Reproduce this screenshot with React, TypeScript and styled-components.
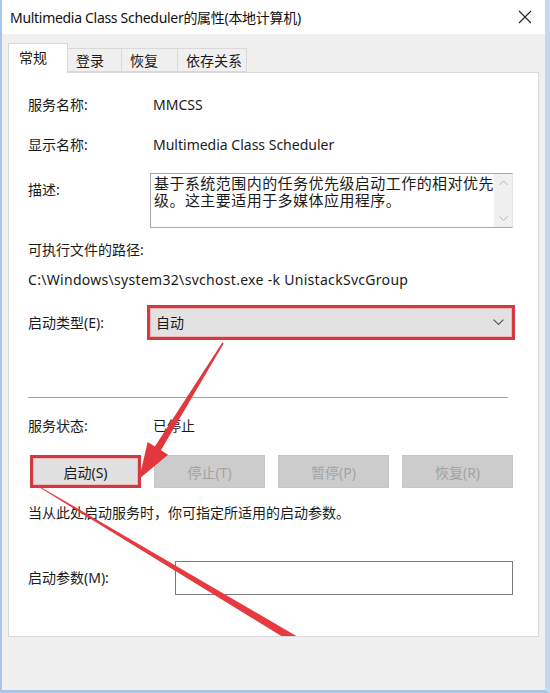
import React from "react";
import styled, { createGlobalStyle } from "styled-components";

const GlobalStyle = createGlobalStyle`
  html, body {
    margin: 0;
    padding: 0;
    background: #ffffff;
  }
  body {
    font-family: "Noto Sans", "Noto Sans CJK SC", sans-serif;
    color: #1a1a1a;
  }
  * {
    box-sizing: border-box;
  }
`;

const Window = styled.div`
  width: 550px;
  height: 693px;
  display: flex;
  flex-direction: column;
  border-left: 2px solid #a9c6ea;
  border-right: 5px solid #c4d8f0;
  border-bottom: 3px solid #a9c6ea;
  background: #f0f0f0;
`;

const TitleBar = styled.div`
  height: 34px;
  flex-shrink: 0;
  background: #ffffff;
  display: flex;
  align-items: center;
  justify-content: space-between;
  padding: 0 12px 0 8px;
`;

const Title = styled.div`
  font-size: 14px;
  letter-spacing: -0.3px;
  color: #111;
`;

const CloseBtn = styled.div`
  width: 16px;
  height: 16px;
  display: flex;
  align-items: center;
  justify-content: center;
`;

const Body = styled.div`
  flex: 1;
  padding: 9px 8px 0 6px;
  display: flex;
  flex-direction: column;
`;

const TabStrip = styled.div`
  display: flex;
  align-items: flex-end;
  height: 29px;
  position: relative;
  z-index: 1;
`;

const Tab = styled.div<{ $active?: boolean; $w: number }>`
  width: ${(p) => p.$w}px;
  height: ${(p) => (p.$active ? 30 : 24)}px;
  margin-bottom: ${(p) => (p.$active ? -1 : 0)}px;
  background: ${(p) => (p.$active ? "#ffffff" : "#f0f0f0")};
  border: 1px solid #d9d9d9;
  border-bottom: ${(p) => (p.$active ? "none" : "1px solid #d9d9d9")};
  border-left: ${(p) => (p.$active ? "1px solid #d9d9d9" : "none")};
  display: flex;
  align-items: center;
  padding-left: ${(p) => (p.$active ? 10 : 8)}px;
  padding-bottom: ${(p) => (p.$active ? 4 : 0)}px;
  font-size: 14px;
  color: #1a1a1a;
`;

const Panel = styled.div`
  height: 565px;
  width: 531px;
  background: #ffffff;
  border: 1px solid #d9d9d9;
  position: relative;
  overflow: hidden;
  padding: 22px 0 0 19px;
  font-size: 14px;
`;

const Row = styled.div<{ $gap: number }>`
  display: flex;
  align-items: center;
  margin-top: ${(p) => p.$gap}px;
  min-height: 20px;
  line-height: 20px;
`;

const TopRow = styled(Row)`
  align-items: flex-start;
`;

const Label = styled.div<{ $w?: number; $pad?: number }>`
  width: ${(p) => p.$w ?? 125}px;
  flex-shrink: 0;
  padding-top: ${(p) => p.$pad ?? 0}px;
  white-space: nowrap;
`;

const Value = styled.div<{ $spacing?: number }>`
  white-space: nowrap;
  letter-spacing: ${(p) => p.$spacing ?? 0}px;
`;

const Description = styled.div`
  margin-left: -3px;
  width: 363px;
  height: 55px;
  border: 1px solid #a8a8a8;
  border-right-color: #e6e6e6;
  display: flex;
  background: #ffffff;
`;

const DescText = styled.div`
  flex: 1;
  padding: 1px 0 0 3px;
  font-size: 15px;
  letter-spacing: 0.45px;
  line-height: 17px;
  color: #1a1a1a;
`;

const ScrollBar = styled.div`
  width: 18px;
  background: #f0f0f0;
  display: flex;
  flex-direction: column;
  justify-content: space-between;
  align-items: center;
  padding: 6px 0;
`;

const Combo = styled.div`
  margin-left: -6px;
  width: 368px;
  height: 35px;
  border: 3px solid #d33a40;
  background: #e2e2e2;
  box-shadow: inset 0 0 0 1px #f0b8ba;
  display: flex;
  align-items: center;
  justify-content: space-between;
  padding: 0 8px 0 6px;
`;

const Divider = styled.div`
  margin-top: 57px;
  width: 480px;
  height: 1px;
  background: #a3a3a3;
`;

const ButtonRow = styled.div`
  margin-top: 19px;
  margin-left: 2px;
  width: 483px;
  display: grid;
  grid-template-columns: repeat(4, 1fr);
  column-gap: 13px;
`;

const Button = styled.div<{ $disabled?: boolean; $marked?: boolean }>`
  height: 33px;
  display: flex;
  align-items: center;
  justify-content: center;
  font-size: 14px;
  background: ${(p) => (p.$disabled ? "#cccccc" : "#e1e1e1")};
  color: ${(p) => (p.$disabled ? "#a3a3a3" : "#1a1a1a")};
  border: ${(p) => (p.$marked ? "3px solid #d33a40" : "1px solid #c6c6c6")};
  box-shadow: ${(p) => (p.$marked ? "inset 0 0 0 1px #f0b8ba" : "none")};
`;

const Hint = styled.div`
  margin-top: 15px;
  line-height: 20px;
  white-space: nowrap;
`;

const Input = styled.div`
  width: 338px;
  height: 34px;
  border: 1px solid #7a7a7a;
  background: #ffffff;
`;

const Overlay = styled.svg`
  position: absolute;
  left: 0;
  top: 0;
  width: 100%;
  height: 100%;
  pointer-events: none;
`;

const Chevron = ({ up, color, size = 10 }: { up?: boolean; color: string; size?: number }) => (
  <svg width={size} height={size * 0.6} viewBox="0 0 10 6">
    <polyline
      points={up ? "0.5,5.5 5,1 9.5,5.5" : "0.5,0.5 5,5 9.5,0.5"}
      fill="none"
      stroke={color}
      strokeWidth="1"
    />
  </svg>
);

// panel origin in page coords: (8, 72)
const ox = 8;
const oy = 72;
const pts = (list: number[][]) => list.map(([x, y]) => `${x - ox},${y - oy}`).join(" ");

export default function App() {
  return (
    <>
      <GlobalStyle />
      <Window>
        <TitleBar>
          <Title>Multimedia Class Scheduler的属性(本地计算机)</Title>
          <CloseBtn>
            <svg width="14" height="14" viewBox="0 0 14 14">
              <path d="M1 1 L13 13 M13 1 L1 13" stroke="#222" strokeWidth="1.1" />
            </svg>
          </CloseBtn>
        </TitleBar>
        <Body>
          <TabStrip>
            <Tab $active $w={60}>常规</Tab>
            <Tab $w={54}>登录</Tab>
            <Tab $w={56}>恢复</Tab>
            <Tab $w={69}>依存关系</Tab>
          </TabStrip>
          <Panel>
            <Row $gap={0}>
              <Label>服务名称:</Label>
              <Value>MMCSS</Value>
            </Row>
            <Row $gap={20}>
              <Label>显示名称:</Label>
              <Value>Multimedia Class Scheduler</Value>
            </Row>
            <TopRow $gap={18}>
              <Label $pad={7}>描述:</Label>
              <Description>
                <DescText>基于系统范围内的任务优先级启动工作的相对优先级。这主要适用于多媒体应用程序。</DescText>
                <ScrollBar>
                  <Chevron up color="#b0b0b0" size={9} />
                  <Chevron color="#b0b0b0" size={9} />
                </ScrollBar>
              </Description>
            </TopRow>
            <Row $gap={12}>
              <Value>可执行文件的路径:</Value>
            </Row>
            <Row $gap={10}>
              <Value $spacing={0.3}>C:\Windows\system32\svchost.exe -k UnistackSvcGroup</Value>
            </Row>
            <Row $gap={15}>
              <Label>启动类型(E):</Label>
              <Combo>
                <span>自动</span>
                <Chevron color="#555" size={11} />
              </Combo>
            </Row>
            <Divider />
            <Row $gap={18}>
              <Label>服务状态:</Label>
              <Value>已停止</Value>
            </Row>
            <ButtonRow>
              <Button $marked>启动(S)</Button>
              <Button $disabled>停止(T)</Button>
              <Button $disabled>暂停(P)</Button>
              <Button $disabled>恢复(R)</Button>
            </ButtonRow>
            <Hint>当从此处启动服务时，你可指定所适用的启动参数。</Hint>
            <Row $gap={38}>
              <Label $w={147}>启动参数(M):</Label>
              <Input />
            </Row>
            <Overlay>
              <polygon
                fill="#e2373d"
                points={pts([
                  [222.7, 342.4],
                  [221.3, 341.6],
                  [153.9, 445.6],
                  [146.7, 441.1],
                  [138, 478],
                  [167.1, 453.7],
                  [159.9, 449.2],
                ])}
              />
              <polygon
                fill="#e63a40"
                points={pts([
                  [37, 484.4],
                  [37, 485.6],
                  [293.9, 643.4],
                  [298.1, 636.6],
                ])}
              />
            </Overlay>
          </Panel>
        </Body>
      </Window>
    </>
  );
}
